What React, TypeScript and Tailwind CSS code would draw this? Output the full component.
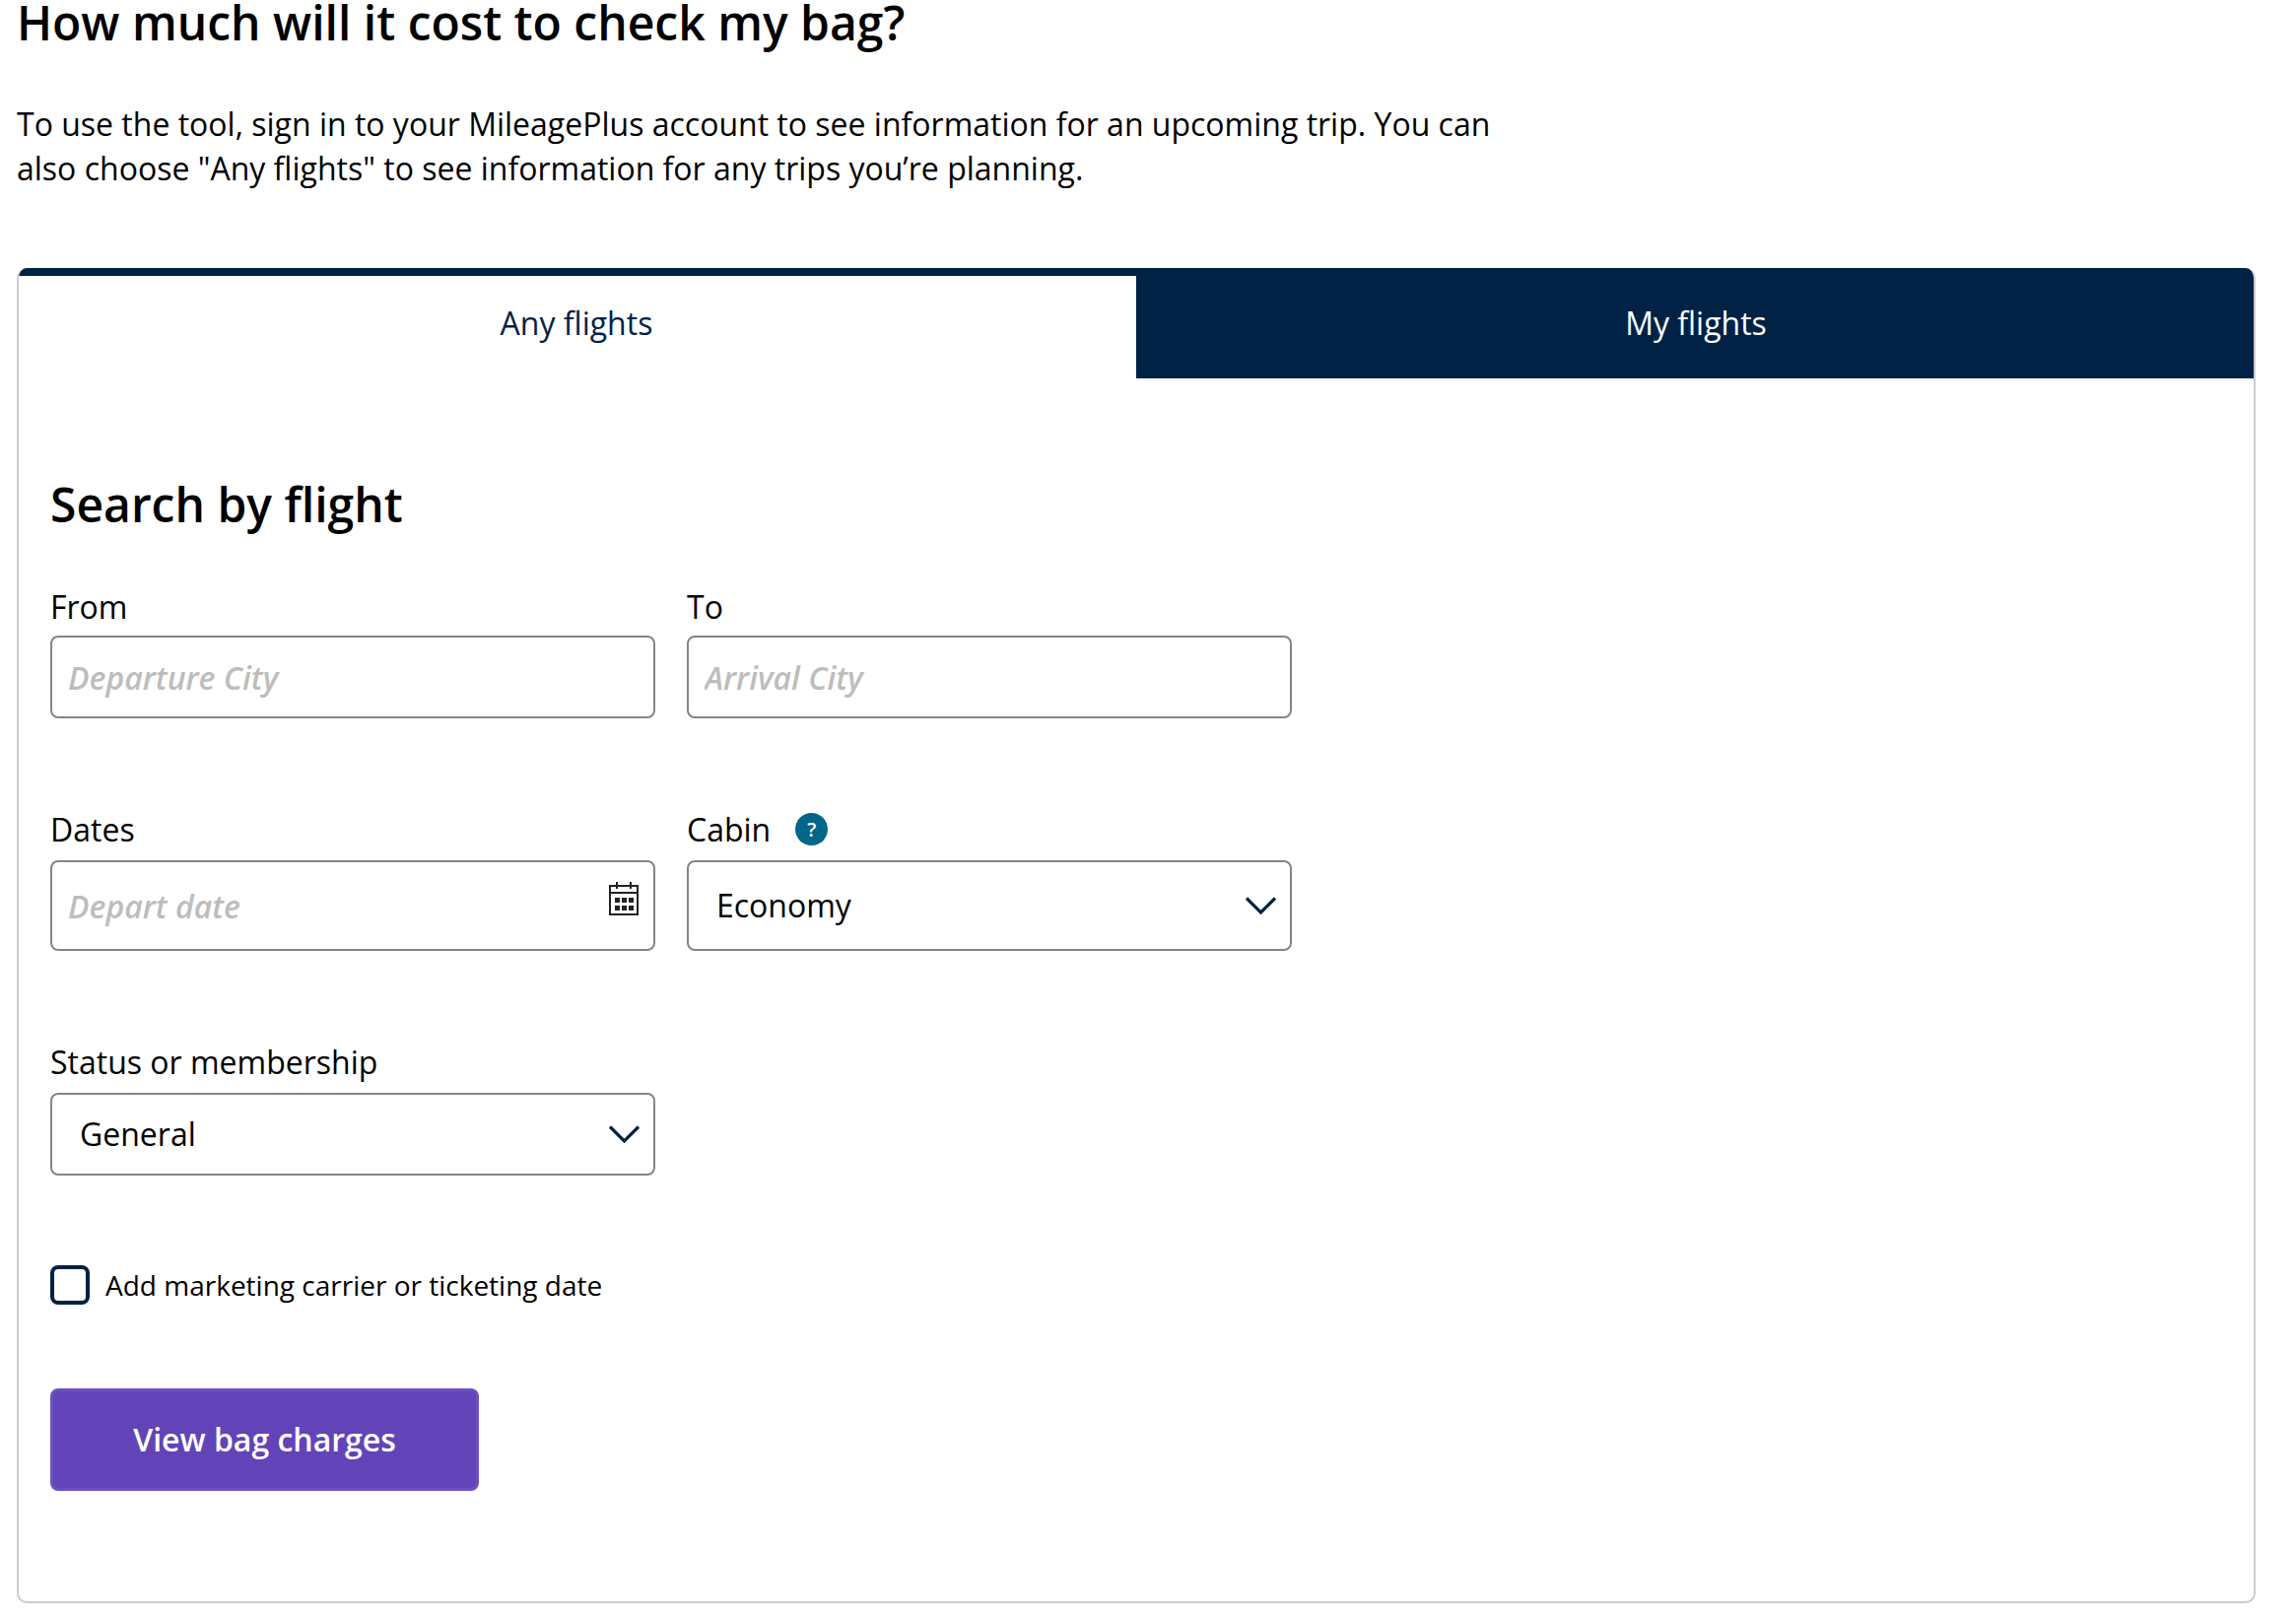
import React from 'react';

const Chevron: React.FC = () => (
    <svg className="absolute right-[15px] top-1/2 -translate-y-1/2 pointer-events-none" width="33" height="20" viewBox="0 0 33 20" fill="none">
        <path d="M2 2.5 L16.5 17 L31 2.5" stroke="#002244" strokeWidth="3.2" />
    </svg>
);

const CalendarIcon: React.FC = () => (
    <svg className="absolute right-[17px] top-[22px]" width="30" height="34" viewBox="0 0 30 34" fill="none">
        <rect x="1" y="4" width="28" height="29" stroke="#222" strokeWidth="2" />
        <path d="M1 11 H29" stroke="#222" strokeWidth="2" />
        <path d="M8 0 V7 M22 0 V7" stroke="#222" strokeWidth="2" />
        <rect x="6" y="16" width="5" height="5" fill="#222" />
        <rect x="13" y="16" width="5" height="5" fill="#222" />
        <rect x="20" y="16" width="5" height="5" fill="#222" />
        <rect x="6" y="24" width="5" height="5" fill="#222" />
        <rect x="13" y="24" width="5" height="5" fill="#222" />
        <rect x="20" y="24" width="5" height="5" fill="#222" />
    </svg>
);

const fieldClass = 'block w-full border-2 border-[#858585] rounded-[8px] bg-white outline-none';
const placeholderClass = 'px-[16px] text-[32px] italic font-semibold placeholder:text-[#bdbdbd]';
const selectClass = 'appearance-none pl-[28px] pr-[60px] text-[32px] text-black';

export default function App() {
    return (
        <div className="h-[1642px] overflow-hidden bg-white text-black font-['Open_Sans',sans-serif] pl-[17px] pr-[41px]">
            <h1 className="text-[48px] leading-[46px] font-semibold">How much will it cost to check my bag?</h1>

            <p className="mt-[57px] w-[1540px] text-[32px] leading-[45px]">
                To use the tool, sign in to your MileagePlus account to see information for an upcoming trip. You can also choose "Any flights" to see information for any trips you’re planning.
            </p>

            {/* Tabbed card */}
            <div className="mt-[79px] h-[1355px] border-2 border-t-0 border-[#cccccc] rounded-[10px] overflow-hidden">
                <div className="grid grid-cols-2 h-[112px] -mx-[2px]">
                    <div className="border-t-[8px] border-[#002244] flex items-center justify-center pb-[8px] text-[32px] text-[#002244]">
                        Any flights
                    </div>
                    <div className="bg-[#002244] flex items-center justify-center text-[32px] text-white">
                        My flights
                    </div>
                </div>

                <div className="pl-[32px] pt-[98px]">
                    <h2 className="text-[48px] leading-[60px] font-semibold">Search by flight</h2>

                    <div className="mt-[51px] grid grid-cols-[614px_614px] gap-x-[32px] items-start">
                        <div>
                            <label className="block text-[32px] leading-[45px] mb-[7px]">From</label>
                            <input className={`${fieldClass} ${placeholderClass} h-[84px]`} placeholder="Departure City" />
                        </div>
                        <div>
                            <label className="block text-[32px] leading-[45px] mb-[7px]">To</label>
                            <input className={`${fieldClass} ${placeholderClass} h-[84px]`} placeholder="Arrival City" />
                        </div>

                        <div className="mt-[90px]">
                            <label className="block text-[32px] leading-[45px] mb-[9px]">Dates</label>
                            <div className="relative">
                                <input className={`${fieldClass} ${placeholderClass} h-[92px]`} placeholder="Depart date" />
                                <CalendarIcon />
                            </div>
                        </div>
                        <div className="mt-[90px]">
                            <div className="flex items-center gap-[25px] mb-[9px]">
                                <label className="text-[32px] leading-[45px]">Cabin</label>
                                <span className="w-[33px] h-[33px] rounded-full bg-[#00668a] text-white text-[20px] font-semibold flex items-center justify-center">?</span>
                            </div>
                            <div className="relative">
                                <select className={`${fieldClass} ${selectClass} h-[92px]`} defaultValue="Economy">
                                    <option>Economy</option>
                                </select>
                                <Chevron />
                            </div>
                        </div>

                        <div className="mt-[90px]">
                            <label className="block text-[32px] leading-[45px] mb-[9px]">Status or membership</label>
                            <div className="relative">
                                <select className={`${fieldClass} ${selectClass} h-[84px]`} defaultValue="General">
                                    <option>General</option>
                                </select>
                                <Chevron />
                            </div>
                        </div>
                    </div>

                    <label className="mt-[91px] flex items-center gap-[16px] text-[28px] leading-[40px]">
                        <span className="w-[40px] h-[40px] border-[4px] border-[#002244] rounded-[8px]" />
                        Add marketing carrier or ticketing date
                    </label>

                    <button className="mt-[85px] block w-[435px] h-[104px] rounded-[8px] bg-[#6244b8] border-[3px] border-[#6d50c4] text-white text-[32px] font-semibold">
                        View bag charges
                    </button>
                </div>
            </div>
        </div>
    );
}
